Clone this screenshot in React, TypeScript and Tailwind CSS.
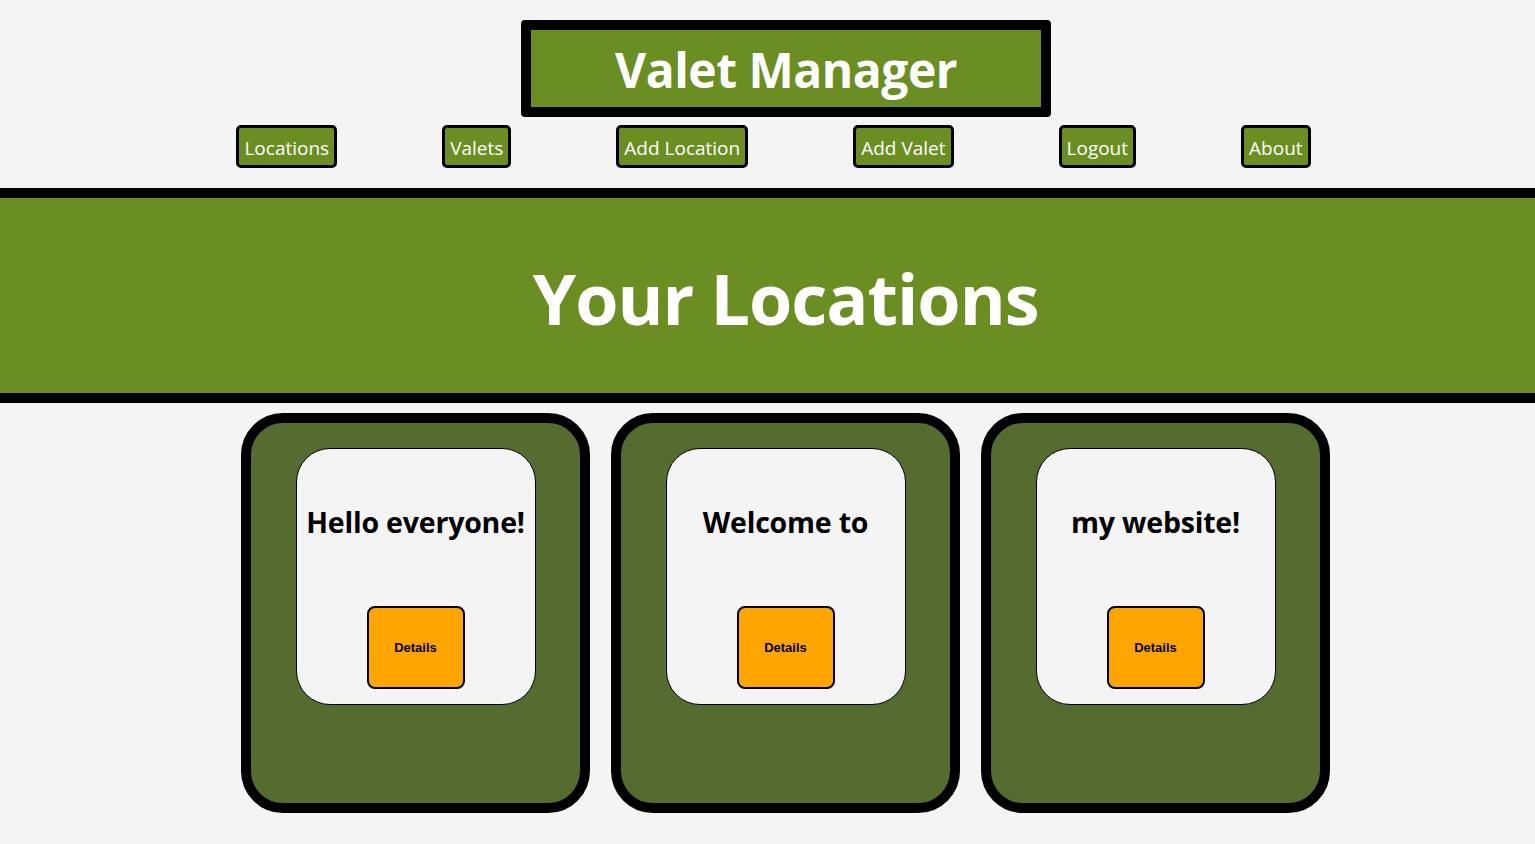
const links = ["Locations", "Valets", "Add Location", "Add Valet", "Logout", "About"];
const locations = ["Hello everyone!", "Welcome to", "my website!"];

function LocationCard({ name }: { name: string }) {
  return (
    <div className="w-[349px] h-[400px] border-[10px] border-black rounded-[42px] bg-[#556b2f] pt-[25px] flex justify-center items-start">
      <div className="w-[240px] h-[257px] border border-black rounded-[34px] bg-[#f4f4f4] flex flex-col items-center">
        <h2 className="mt-[55px] text-[28.5px] leading-[36px] font-bold text-black whitespace-nowrap tracking-[-0.2px]">{name}</h2>
        <button className="mt-auto mb-[15px] w-[98px] h-[83px] border-2 border-black rounded-[8px] bg-[#ffa500] text-black text-[13px] font-bold font-['Liberation_Sans',Arial,sans-serif]">
          Details
        </button>
      </div>
    </div>
  );
}

export default function App() {
  return (
    <div className="min-h-screen bg-[#f4f4f4] font-['Open_Sans',sans-serif]">
      {/* Header */}
      <div className="flex justify-center pt-5 pl-[37px]">
        <div className="w-[530px] h-[97px] border-[10px] border-black rounded-[4px] bg-[#6b8e23] flex items-center justify-center">
          <h1 className="text-white text-[48px] font-bold leading-none tracking-[-0.5px] pt-[3px]">Valet Manager</h1>
        </div>
      </div>

      <nav className="mt-2 flex justify-center gap-[105px] pl-[12px]">
        {links.map((l) => (
          <button
            key={l}
            className="h-[43px] px-[5px] pt-[3px] border-[3px] border-black rounded-[5px] bg-[#6b8e23] text-white text-[19px] leading-none"
          >
            {l}
          </button>
        ))}
      </nav>

      {/* Banner */}
      <div className="mt-5 h-[215px] border-y-[10px] border-black bg-[#6b8e23] flex items-center justify-center pl-[36px]">
        <h1 className="text-white text-[70px] font-bold leading-none tracking-[-1px] pt-[4px]">Your Locations</h1>
      </div>

      {/* Cards */}
      <div className="mt-[10px] flex justify-center gap-[21px] pl-[36px]">
        {locations.map((n) => (
          <LocationCard key={n} name={n} />
        ))}
      </div>
    </div>
  );
}
